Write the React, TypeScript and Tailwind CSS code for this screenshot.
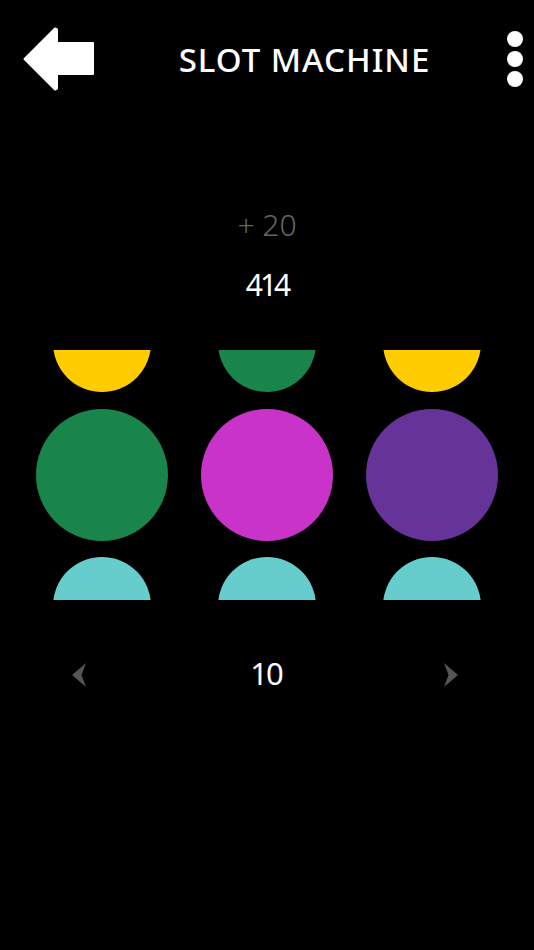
import React from "react";

const font = { fontFamily: '"Noto Sans", "Open Sans", sans-serif' };

function Column({ top, mid, bottom }: { top: string; mid: string; bottom: string }) {
  return (
    <div className="flex w-[132px] flex-col items-center">
      <div className="h-[42px] w-[98px] overflow-hidden">
        <div className={`mt-[-56px] h-[98px] w-[98px] rounded-full ${top}`} />
      </div>
      <div className={`mt-[17px] h-[132px] w-[132px] rounded-full ${mid}`} />
      <div className="mt-[16px] h-[43px] w-[98px] overflow-hidden">
        <div className={`h-[98px] w-[98px] rounded-full ${bottom}`} />
      </div>
    </div>
  );
}

export default function App() {
  return (
    <div className="flex h-[950px] w-full flex-col bg-black text-white" style={font}>
      <div className="flex h-[118px] items-center pl-[23px] pr-[11px]">
        <svg width="73" height="65" viewBox="0 0 73 65" className="shrink-0">
          <polygon
            points="1.5,32 32,1.5 34,2.5 34,16 70,16 70,47 34,47 34,61.5 32,62.5"
            fill="#fff"
            stroke="#fff"
            strokeWidth="2"
            strokeLinejoin="round"
          />
        </svg>
        <div className="flex-1 pl-[6px] text-center text-[33px] font-medium leading-none tracking-[1px]">
          SLOT MACHINE
        </div>
        <div className="flex w-[16px] flex-col gap-[4px]">
          <div className="h-[16px] w-[16px] rounded-full bg-white" />
          <div className="h-[16px] w-[16px] rounded-full bg-white" />
          <div className="h-[16px] w-[16px] rounded-full bg-white" />
        </div>
      </div>

      <div className="mt-[87px] h-[40px] text-center text-[30px] font-light leading-[40px] text-[#666666]">
        + 20
      </div>
      <div className="mt-[20px] h-[40px] text-center text-[30px] leading-[40px] tracking-[-3px] text-white">
        414
      </div>

      <div className="mt-[45px] flex justify-center gap-[33px]">
        <Column top="bg-[#ffcc00]" mid="bg-[#19854b]" bottom="bg-[#66cccc]" />
        <Column top="bg-[#19854b]" mid="bg-[#c933c9]" bottom="bg-[#66cccc]" />
        <Column top="bg-[#ffcc00]" mid="bg-[#663399]" bottom="bg-[#66cccc]" />
      </div>

      <div className="mt-[53px] flex h-[40px] items-center justify-between pl-[72px] pr-[76px]">
        <svg width="14" height="24" viewBox="0 0 14 24" className="mt-[4px]">
          <path d="M14 0 L0 12 L14 24 L9.5 12 Z" fill="#555555" />
        </svg>
        <div className="pl-[2px] text-[31px] leading-[40px] tracking-[-2px] text-white">10</div>
        <svg width="14" height="24" viewBox="0 0 14 24" className="mt-[4px]">
          <path d="M0 0 L14 12 L0 24 L4.5 12 Z" fill="#555555" />
        </svg>
      </div>
    </div>
  );
}
